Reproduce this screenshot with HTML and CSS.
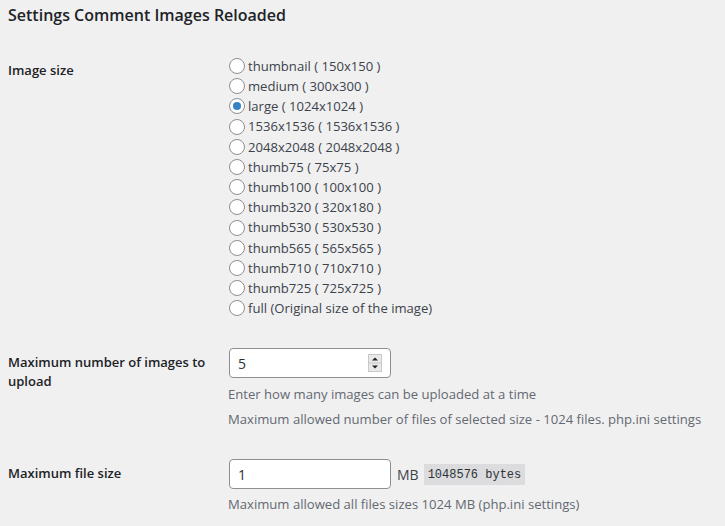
FILE: index.html
```html
<!DOCTYPE html>
<html lang="en">
<head>
  <meta charset="UTF-8">
  <title>Settings Comment Images Reloaded</title>
  <link rel="stylesheet" href="styles.css">
</head>
<body>
  <h2 class="title">Settings Comment Images Reloaded</h2>
  <table class="form-table">
    <tr>
      <th>Image size</th>
      <td>
        <div class="radios">
          <label class="radio"><span class="dot"></span>thumbnail ( 150x150 )</label>
          <label class="radio"><span class="dot"></span>medium ( 300x300 )</label>
          <label class="radio"><span class="dot checked"></span>large ( 1024x1024 )</label>
          <label class="radio"><span class="dot"></span>1536x1536 ( 1536x1536 )</label>
          <label class="radio"><span class="dot"></span>2048x2048 ( 2048x2048 )</label>
          <label class="radio"><span class="dot"></span>thumb75 ( 75x75 )</label>
          <label class="radio"><span class="dot"></span>thumb100 ( 100x100 )</label>
          <label class="radio"><span class="dot"></span>thumb320 ( 320x180 )</label>
          <label class="radio"><span class="dot"></span>thumb530 ( 530x530 )</label>
          <label class="radio"><span class="dot"></span>thumb565 ( 565x565 )</label>
          <label class="radio"><span class="dot"></span>thumb710 ( 710x710 )</label>
          <label class="radio"><span class="dot"></span>thumb725 ( 725x725 )</label>
          <label class="radio"><span class="dot"></span>full (Original size of the image)</label>
        </div>
      </td>
    </tr>
    <tr>
      <th>Maximum number of images to upload</th>
      <td>
        <div class="field">
          <span class="value">5</span>
          <span class="spin">
            <svg width="14" height="18" viewBox="0 0 14 18">
              <rect x="0.5" y="0.5" width="13" height="17" fill="#e9e9e9" stroke="#c8c8c8"/>
              <line x1="1" y1="9" x2="13" y2="9" stroke="#c8c8c8"/>
              <path d="M4 6.5 L7 3.5 L10 6.5 Z" fill="#1d2327"/>
              <path d="M4 11.5 L7 14.5 L10 11.5 Z" fill="#1d2327"/>
            </svg>
          </span>
        </div>
        <p class="description">Enter how many images can be uploaded at a time</p>
        <p class="description">Maximum allowed number of files of selected size - 1024 files. php.ini settings</p>
      </td>
    </tr>
    <tr>
      <th>Maximum file size</th>
      <td>
        <div class="inline">
          <div class="field"><span class="value">1</span></div>
          <span class="unit">MB</span>
          <code>1048576 bytes</code>
        </div>
        <p class="description">Maximum allowed all files sizes 1024 MB (php.ini settings)</p>
      </td>
    </tr>
  </table>
</body>
</html>
```

FILE: styles.css
```css
body {
  margin: 0;
  padding: 0 8px;
  background-color: #f0f0f1;
  color: #3c434a;
  font-family: "Open Sans", "Noto Sans", sans-serif;
  font-size: 13.1px;
  line-height: 1.4;
}
.title {
  margin: 4px 0 0;
  font-size: 16px;
  font-weight: 600;
  line-height: 22px;
  color: #1d2327;
}
.form-table {
  margin-top: 15px;
  border-collapse: collapse;
  width: 100%;
}
.form-table th {
  width: 200px;
  padding: 20px 20px 20px 0;
  vertical-align: top;
  text-align: left;
  font-size: 13px;
  font-weight: 600;
  line-height: 18.2px;
  color: #1d2327;
}
.form-table td {
  padding: 15px 0;
  vertical-align: top;
}
.radios {
  display: flex;
  flex-direction: column;
}
.radio {
  display: flex;
  align-items: center;
  height: 20.2px;
}
.dot {
  box-sizing: border-box;
  width: 16px;
  height: 16px;
  margin: 0 3px 0 1px;
  border: 1px solid #8c8f94;
  border-radius: 50%;
  background-color: #fff;
  display: flex;
  align-items: center;
  justify-content: center;
}
.dot.checked::before {
  content: "";
  width: 8px;
  height: 8px;
  border-radius: 50%;
  background-color: #3582c4;
}
.field {
  box-sizing: border-box;
  width: 162px;
  height: 30px;
  margin-left: 1px;
  padding: 0 8px;
  background-color: #fff;
  border: 1px solid #8c8f94;
  border-radius: 4px;
  display: flex;
  align-items: center;
  justify-content: space-between;
  color: #2c3338;
  font-size: 14px;
}
.spin {
  display: flex;
}
.description {
  margin: 5px 0 0;
  line-height: 20px;
  color: #646970;
}
.field + .description {
  margin-top: 6px;
}
.inline {
  display: flex;
  align-items: center;
}
.unit {
  margin-left: 6px;
  font-size: 14px;
}
code {
  margin-left: 5px;
  padding: 3px 4px 2px;
  background-color: #dcdcde;
  font-family: "Liberation Mono", monospace;
  font-size: 12px;
  color: #2c3338;
}
```
